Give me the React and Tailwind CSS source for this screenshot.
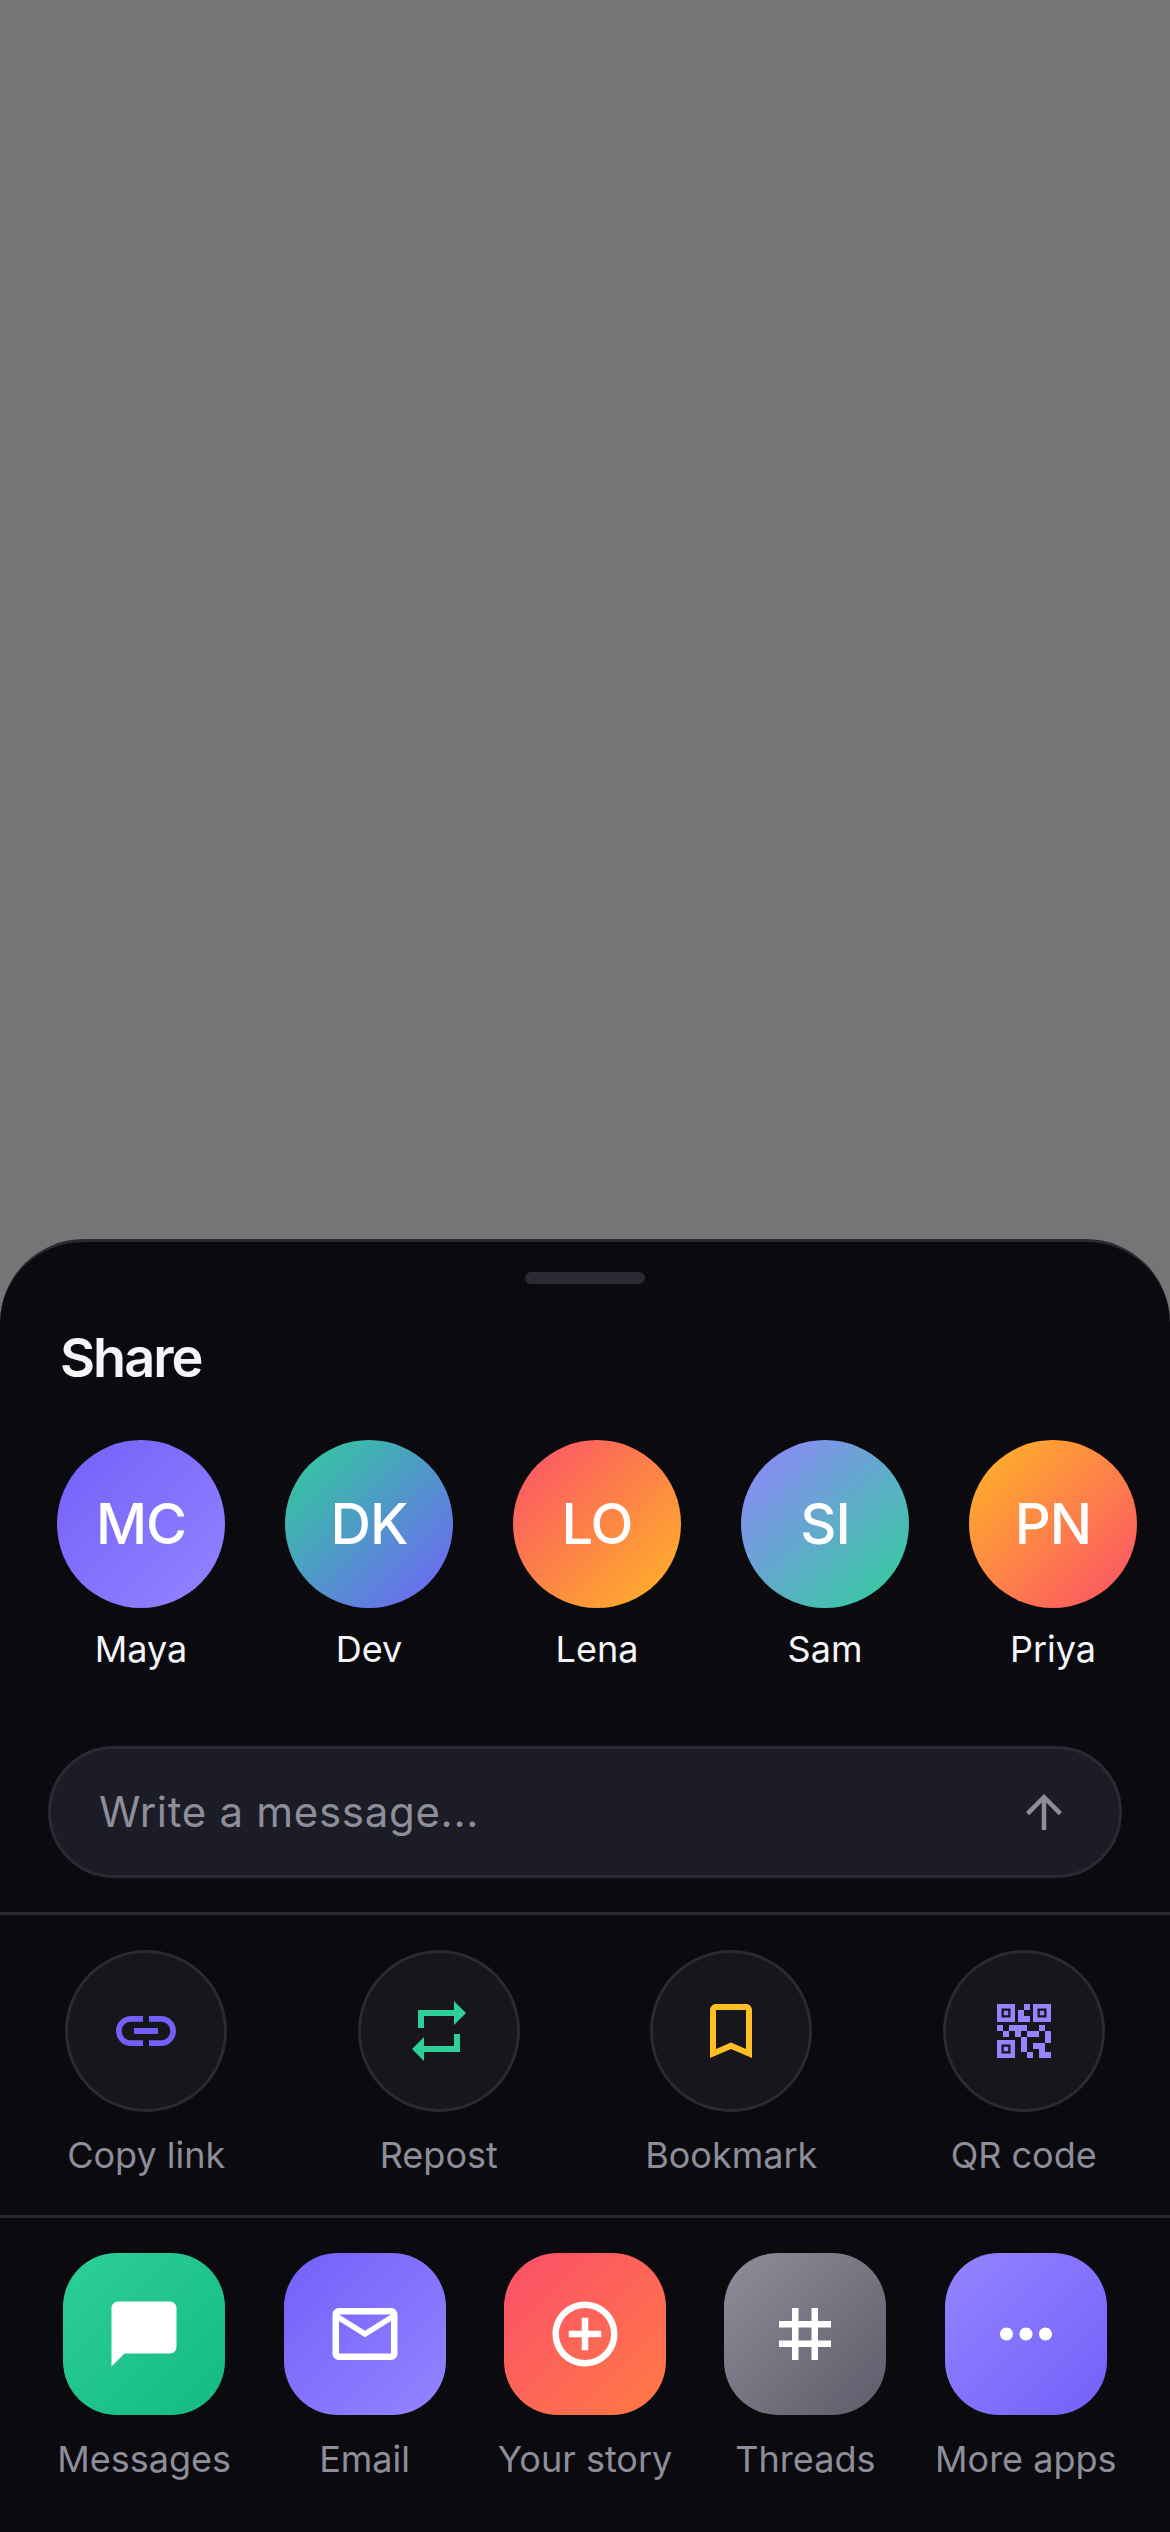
import { MdLink, MdRepeat, MdBookmarkBorder, MdChatBubble, MdMailOutline, MdAddCircleOutline, MdTag, MdMoreHoriz, MdArrowUpward } from "react-icons/md";

const people = [
  { initials: "MC", name: "Maya", bg: "bg-[linear-gradient(135deg,#7360fa,#9484ff)]" },
  { initials: "DK", name: "Dev", bg: "bg-[linear-gradient(135deg,#2dd097,#7360fa)]" },
  { initials: "LO", name: "Lena", bg: "bg-[linear-gradient(135deg,#fb4f6a,#ffb624)]" },
  { initials: "SI", name: "Sam", bg: "bg-[linear-gradient(135deg,#9484ff,#2dd097)]" },
  { initials: "PN", name: "Priya", bg: "bg-[linear-gradient(135deg,#ffb624,#fb4f6a)]" },
];

function QrIcon() {
  return (
    <svg viewBox="0 0 24 24" className="w-[72px] h-[72px] text-[#9484ff]" fill="currentColor">
      <path d="M15 21h-2v-2h2v2zM13 14h-2v5h2v-5zM21 12h-2v4h2v-4zM19 10h-2v2h2v-2zM7 12H5v2h2v-2zM5 10H3v2h2v-2zM12 5h2V3h-2v2zM4.5 4.5v3h3v-3h-3zM9 9H3V3h6v6zM4.5 16.5v3h3v-3h-3zM9 21H3v-6h6v6zM16.5 4.5v3h3v-3h-3zM21 9h-6V3h6v6zM19 19v-3h-4v2h2v3h4v-2h-2zM17 12h-4v2h4v-2zM13 10H7v2h2v2h2v-2h2v-2zM14 9V7h-2V5h-2v4h4zM6.75 5.25h-1.5v1.5h1.5v-1.5zM6.75 17.25h-1.5v1.5h1.5v-1.5zM18.75 5.25h-1.5v1.5h1.5v-1.5z" />
    </svg>
  );
}

const actions = [
  { label: "Copy link", icon: <MdLink className="w-[72px] h-[72px] text-[#7360fa]" /> },
  { label: "Repost", icon: <MdRepeat className="w-[72px] h-[72px] text-[#2dd097]" /> },
  { label: "Bookmark", icon: <MdBookmarkBorder className="w-[72px] h-[72px] text-[#ffbf24]" /> },
  { label: "QR code", icon: <QrIcon /> },
];

const apps = [
  { label: "Messages", bg: "bg-[linear-gradient(135deg,#2dd097,#14ba80)]", icon: <MdChatBubble className="w-[78px] h-[78px]" /> },
  { label: "Email", bg: "bg-[linear-gradient(135deg,#7360fa,#9484ff)]", icon: <MdMailOutline className="w-[78px] h-[78px]" /> },
  { label: "Your story", bg: "bg-[linear-gradient(135deg,#fb4f6a,#ff7a45)]", icon: <MdAddCircleOutline className="w-[78px] h-[78px]" /> },
  { label: "Threads", bg: "bg-[linear-gradient(135deg,#8e8e9a,#5c5c6a)]", icon: <MdTag className="w-[78px] h-[78px]" /> },
  { label: "More apps", bg: "bg-[linear-gradient(135deg,#9484ff,#7360fa)]", icon: <MdMoreHoriz className="w-[78px] h-[78px]" /> },
];

export default function App() {
  return (
    <div className="h-[2532px] bg-[#757575] flex flex-col justify-end font-['Inter',sans-serif]">
      <div className="h-[1293px] bg-[#0a0a0f] border-t-[3px] border-[#2a2a35] rounded-t-[84px] overflow-hidden">
        {/* drag handle */}
        <div className="w-[120px] h-[12px] mx-auto mt-[30px] rounded-full bg-[#2a2a35]" />

        <h2 className="mt-[41px] ml-[60px] text-[54px] leading-[66px] font-semibold tracking-[-2px] text-[#f5f5f7]">Share</h2>

        <div className="mt-[49px] px-[57px] flex gap-[60px]">
          {people.map((p) => (
            <div key={p.name} className="w-[168px] flex flex-col items-center">
              <div className={`w-[168px] h-[168px] rounded-full flex items-center justify-center text-white text-[56px] font-medium tracking-[-1px] ${p.bg}`}>
                {p.initials}
              </div>
              <div className="mt-[17px] text-[36px] leading-[48px] text-[#f5f5f7]">{p.name}</div>
            </div>
          ))}
        </div>

        <div className="mt-[73px] mx-[48px] h-[132px] rounded-full bg-[#1c1c26] border-[3px] border-[#2a2a35] pl-[48px] pr-[48px] flex items-center justify-between">
          <span className="pb-[2px] text-[42px] tracking-[0.7px] text-[#8e8e9a]">Write a message...</span>
          <MdArrowUpward className="w-[54px] h-[54px] text-[#8e8e9a]" />
        </div>

        <div className="mt-[34px] border-t-[3px] border-[#2a2a35] pt-[35px] pb-[36px] grid grid-cols-4">
          {actions.map((a) => (
            <div key={a.label} className="flex flex-col items-center">
              <div className="w-[162px] h-[162px] rounded-full bg-[#16161c] border-[3px] border-[#2a2a35] flex items-center justify-center">
                {a.icon}
              </div>
              <div className="mt-[19px] text-[36px] leading-[48px] text-[#8e8e9a]">{a.label}</div>
            </div>
          ))}
        </div>

        <div className="border-t-[3px] border-[#2a2a35] pt-[35px] px-[34px] grid grid-cols-5">
          {apps.map((a) => (
            <div key={a.label} className="flex flex-col items-center">
              <div className={`w-[162px] h-[162px] rounded-[54px] flex items-center justify-center text-white ${a.bg}`}>
                {a.icon}
              </div>
              <div className="mt-[20px] text-[36px] leading-[48px] text-[#8e8e9a] whitespace-nowrap">{a.label}</div>
            </div>
          ))}
        </div>
      </div>
    </div>
  );
}
